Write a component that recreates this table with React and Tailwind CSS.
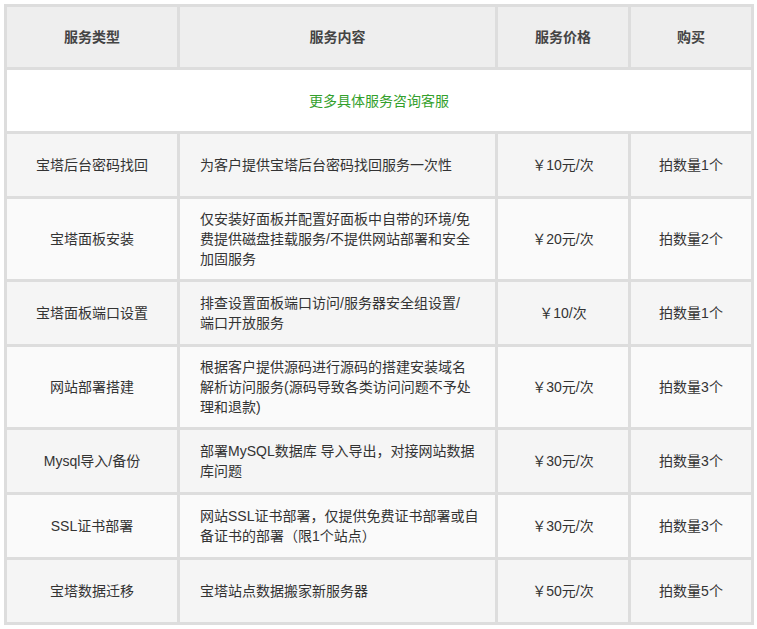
const rows = [
  { type: '宝塔后台密码找回', desc: ['为客户提供宝塔后台密码找回服务一次性'], price: '￥10元/次', qty: '拍数量1个' },
  { type: '宝塔面板安装', desc: ['仅安装好面板并配置好面板中自带的环境/免', '费提供磁盘挂载服务/不提供网站部署和安全', '加固服务'], price: '￥20元/次', qty: '拍数量2个' },
  { type: '宝塔面板端口设置', desc: ['排查设置面板端口访问/服务器安全组设置/', '端口开放服务'], price: '￥10/次', qty: '拍数量1个' },
  { type: '网站部署搭建', desc: ['根据客户提供源码进行源码的搭建安装域名', '解析访问服务(源码导致各类访问问题不予处', '理和退款)'], price: '￥30元/次', qty: '拍数量3个' },
  { type: 'Mysql导入/备份', desc: ['部署MySQL数据库 导入导出，对接网站数据', '库问题'], price: '￥30元/次', qty: '拍数量3个' },
  { type: 'SSL证书部署', desc: ['网站SSL证书部署，仅提供免费证书部署或自', '备证书的部署（限1个站点）'], price: '￥30元/次', qty: '拍数量3个' },
  { type: '宝塔数据迁移', desc: ['宝塔站点数据搬家新服务器'], price: '￥50元/次', qty: '拍数量5个' },
];

export default function App() {
  return (
    <div
      className="min-h-screen bg-white p-[4px] text-[14px] leading-[20px] text-[#333]"
      style={{ fontFamily: '"Liberation Sans", "Noto Sans CJK SC", sans-serif' }}
    >
      <table className="w-[750px] table-fixed border-separate border-spacing-[3px] bg-[#dddddd]">
        <colgroup>
          <col className="w-[170px]" />
          <col className="w-[315px]" />
          <col className="w-[130px]" />
          <col className="w-[120px]" />
        </colgroup>
        <thead>
          <tr className="h-[60px] bg-[#eeeeee] font-bold text-[#444]">
            <th className="text-center">服务类型</th>
            <th className="text-center">服务内容</th>
            <th className="text-center">服务价格</th>
            <th className="text-center">购买</th>
          </tr>
        </thead>
        <tbody>
          <tr className="h-[61px] bg-white">
            <td colSpan={4} className="text-center text-[#33a02c]">更多具体服务咨询客服</td>
          </tr>
          {rows.map((r, i) => (
            <tr key={i} className={i % 2 === 0 ? 'h-[62px] bg-[#f5f5f5]' : 'h-[62px] bg-[#fafafa]'}>
              <td className="py-[10px] text-center">{r.type}</td>
              <td className="py-[10px] pl-[20px] pr-[8px] text-left">
                {r.desc.map((line, j) => (
                  <div key={j} className="whitespace-nowrap">{line}</div>
                ))}
              </td>
              <td className="py-[10px] text-center">{r.price}</td>
              <td className="py-[10px] text-center">{r.qty}</td>
            </tr>
          ))}
        </tbody>
      </table>
    </div>
  );
}
